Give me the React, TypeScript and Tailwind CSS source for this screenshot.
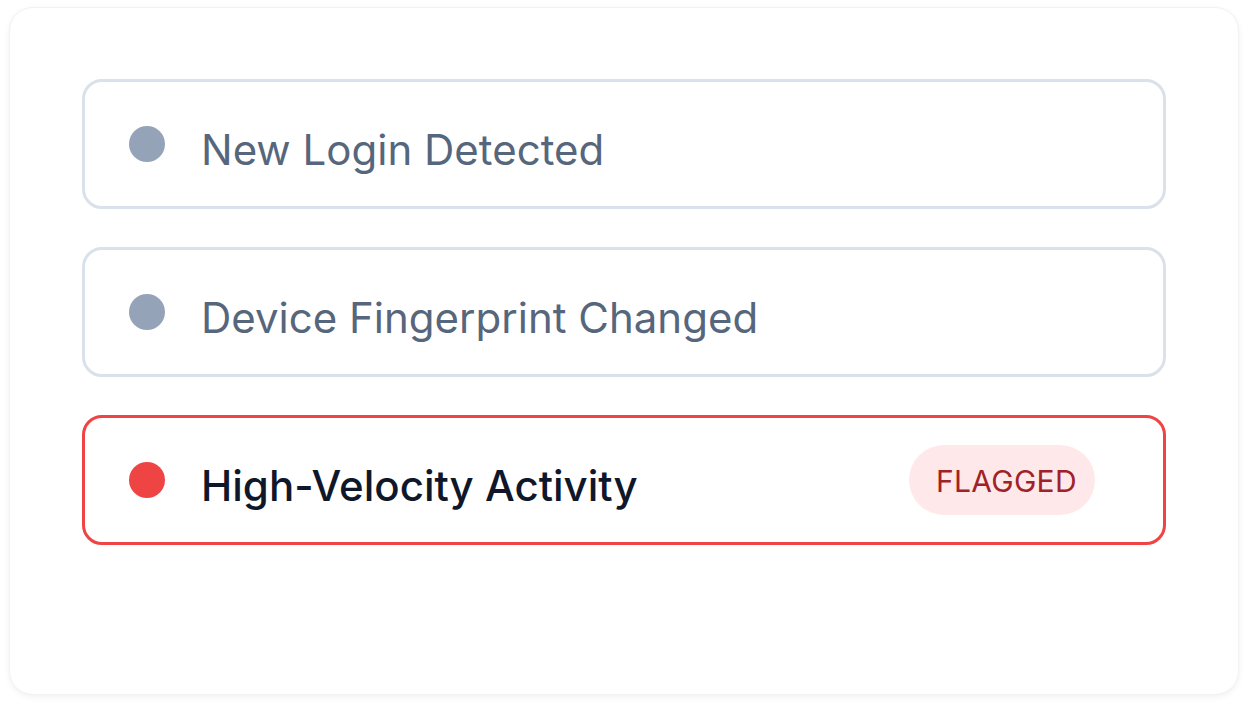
import React from "react";

type Signal = { label: string; flagged?: boolean };

const signals: Signal[] = [
  { label: "New Login Detected" },
  { label: "Device Fingerprint Changed" },
  { label: "High-Velocity Activity", flagged: true },
];

function SignalRow({ label, flagged }: Signal) {
  return (
    <div
      className={
        flagged
          ? "flex h-[130px] items-center justify-between rounded-[20px] border-[3px] border-[#ef4444] pl-[44px] pr-[68px]"
          : "flex h-[130px] items-center justify-between rounded-[20px] border-[3px] border-[#d9e1ea] pl-[44px] pr-[68px]"
      }
    >
      <div className="flex items-center gap-[36px]">
        <span
          className={
            flagged
              ? "h-[36px] w-[36px] shrink-0 rounded-full bg-[#ef4444]"
              : "h-[36px] w-[36px] shrink-0 rounded-full bg-[#94a3b8]"
          }
        />
        <span
          className={
            flagged
              ? "pt-[11px] text-[42px] font-medium leading-none text-[#0f172a]"
              : "pt-[11px] text-[42px] font-normal leading-none text-[#56667c]"
          }
        >
          {label}
        </span>
      </div>
      {flagged && (
        <span className="flex h-[70px] w-[186px] items-center rounded-full bg-[#fee8ea] pl-[27px] pt-[2px] text-[30px] font-normal tracking-[0.01em] text-[#9f2228]">
          FLAGGED
        </span>
      )}
    </div>
  );
}

export default function App() {
  return (
    <div
      className="min-h-screen w-full bg-white pl-[9px] pt-[7px]"
      style={{ fontFamily: "Inter, 'Noto Sans', sans-serif" }}
    >
      <div className="flex h-[688px] w-[1230px] flex-col gap-[38px] rounded-[24px] border border-[#f1f2f4] bg-white px-[72px] pt-[71px] shadow-[0_2px_6px_rgba(0,0,0,0.06)]">
        {signals.map((s) => (
          <SignalRow key={s.label} {...s} />
        ))}
      </div>
    </div>
  );
}
